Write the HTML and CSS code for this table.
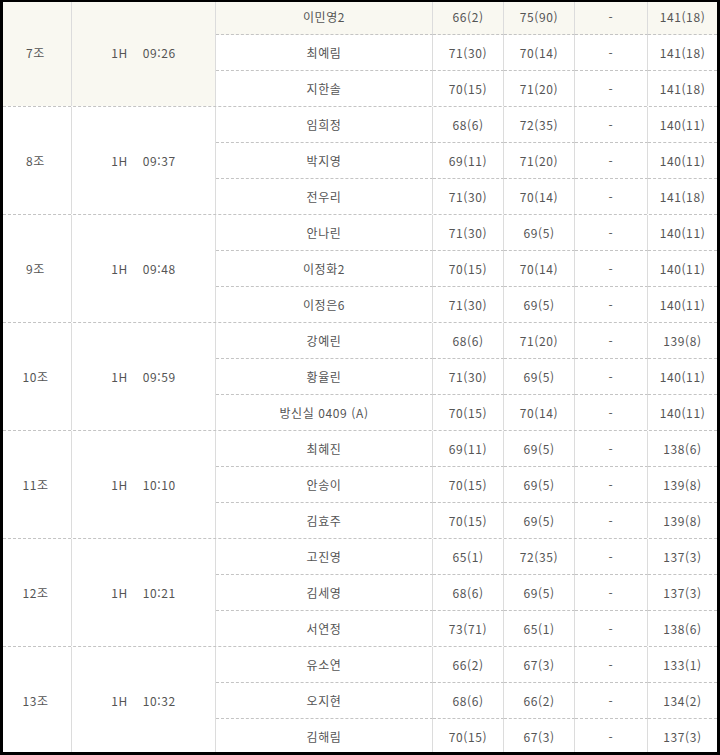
FILE: index.html
```html
<!DOCTYPE html>
<html lang="ko">
<head>
<meta charset="utf-8">
<title>조편성 결과</title>
<link rel="stylesheet" href="styles.css">
</head>
<body>
<div class="frame">
  <div class="board">
    <div class="group hl">
      <div class="c c1 span">7조</div>
      <div class="c c2 span"><span class="hole">1H</span><span>09:26</span></div>
      <div class="c n r1">이민영2</div><div class="c s r1">66(2)</div><div class="c s r1">75(90)</div><div class="c s r1">-</div><div class="c t r1">141(18)</div>
      <div class="c n">최예림</div><div class="c s">71(30)</div><div class="c s">70(14)</div><div class="c s">-</div><div class="c t">141(18)</div>
      <div class="c n last">지한솔</div><div class="c s last">70(15)</div><div class="c s last">71(20)</div><div class="c s last">-</div><div class="c t last">141(18)</div>
    </div>
    <div class="group">
      <div class="c c1 span">8조</div>
      <div class="c c2 span"><span class="hole">1H</span><span>09:37</span></div>
      <div class="c n">임희정</div><div class="c s">68(6)</div><div class="c s">72(35)</div><div class="c s">-</div><div class="c t">140(11)</div>
      <div class="c n">박지영</div><div class="c s">69(11)</div><div class="c s">71(20)</div><div class="c s">-</div><div class="c t">140(11)</div>
      <div class="c n last">전우리</div><div class="c s last">71(30)</div><div class="c s last">70(14)</div><div class="c s last">-</div><div class="c t last">141(18)</div>
    </div>
    <div class="group">
      <div class="c c1 span">9조</div>
      <div class="c c2 span"><span class="hole">1H</span><span>09:48</span></div>
      <div class="c n">안나린</div><div class="c s">71(30)</div><div class="c s">69(5)</div><div class="c s">-</div><div class="c t">140(11)</div>
      <div class="c n">이정화2</div><div class="c s">70(15)</div><div class="c s">70(14)</div><div class="c s">-</div><div class="c t">140(11)</div>
      <div class="c n last">이정은6</div><div class="c s last">71(30)</div><div class="c s last">69(5)</div><div class="c s last">-</div><div class="c t last">140(11)</div>
    </div>
    <div class="group">
      <div class="c c1 span">10조</div>
      <div class="c c2 span"><span class="hole">1H</span><span>09:59</span></div>
      <div class="c n">강예린</div><div class="c s">68(6)</div><div class="c s">71(20)</div><div class="c s">-</div><div class="c t">139(8)</div>
      <div class="c n">황율린</div><div class="c s">71(30)</div><div class="c s">69(5)</div><div class="c s">-</div><div class="c t">140(11)</div>
      <div class="c n last">방신실 0409 (A)</div><div class="c s last">70(15)</div><div class="c s last">70(14)</div><div class="c s last">-</div><div class="c t last">140(11)</div>
    </div>
    <div class="group">
      <div class="c c1 span">11조</div>
      <div class="c c2 span"><span class="hole">1H</span><span>10:10</span></div>
      <div class="c n">최혜진</div><div class="c s">69(11)</div><div class="c s">69(5)</div><div class="c s">-</div><div class="c t">138(6)</div>
      <div class="c n">안송이</div><div class="c s">70(15)</div><div class="c s">69(5)</div><div class="c s">-</div><div class="c t">139(8)</div>
      <div class="c n last">김효주</div><div class="c s last">70(15)</div><div class="c s last">69(5)</div><div class="c s last">-</div><div class="c t last">139(8)</div>
    </div>
    <div class="group">
      <div class="c c1 span">12조</div>
      <div class="c c2 span"><span class="hole">1H</span><span>10:21</span></div>
      <div class="c n">고진영</div><div class="c s">65(1)</div><div class="c s">72(35)</div><div class="c s">-</div><div class="c t">137(3)</div>
      <div class="c n">김세영</div><div class="c s">68(6)</div><div class="c s">69(5)</div><div class="c s">-</div><div class="c t">137(3)</div>
      <div class="c n last">서연정</div><div class="c s last">73(71)</div><div class="c s last">65(1)</div><div class="c s last">-</div><div class="c t last">138(6)</div>
    </div>
    <div class="group">
      <div class="c c1 span">13조</div>
      <div class="c c2 span"><span class="hole">1H</span><span>10:32</span></div>
      <div class="c n">유소연</div><div class="c s">66(2)</div><div class="c s">67(3)</div><div class="c s">-</div><div class="c t">133(1)</div>
      <div class="c n">오지현</div><div class="c s">68(6)</div><div class="c s">66(2)</div><div class="c s">-</div><div class="c t">134(2)</div>
      <div class="c n last">김해림</div><div class="c s last">70(15)</div><div class="c s last">67(3)</div><div class="c s last">-</div><div class="c t last">137(3)</div>
    </div>
  </div>
</div>
</body>
</html>
```

FILE: styles.css
```css
html, body {
  margin: 0;
  padding: 0;
  background: #000;
}

.frame {
  box-sizing: border-box;
  width: 720px;
  height: 755px;
  border-style: solid;
  border-color: #000;
  border-width: 2px 3px 3px 3px;
  background: #fff;
  overflow: hidden;
}

.board {
  margin-top: -3px;
  font-family: "Noto Sans CJK KR", "Noto Sans", sans-serif;
  font-size: 12px;
  letter-spacing: 0.6px;
  color: #555;
}

.group {
  display: grid;
  grid-template-columns: 69px 144px 217px 71px 71px 73px 69px;
  grid-template-rows: 36px 36px 35px;
  border-bottom: 1px dashed #c4c4c4;
  background: #fff;
}

.c {
  box-sizing: border-box;
  display: flex;
  align-items: center;
  justify-content: center;
  border-right: 1px solid #dcdcdc;
  border-bottom: 1px dashed #c4c4c4;
  white-space: nowrap;
}

.c.t {
  border-right: 0;
}

.c.last {
  border-bottom: 0;
}

.c.span {
  grid-row: span 3;
  border-bottom: 0;
}

.c1 {
  padding-right: 3px;
}

.hole {
  margin-right: 15px;
}

.group.hl .span,
.group.hl .r1 {
  background: #f9f8f1;
}
```
